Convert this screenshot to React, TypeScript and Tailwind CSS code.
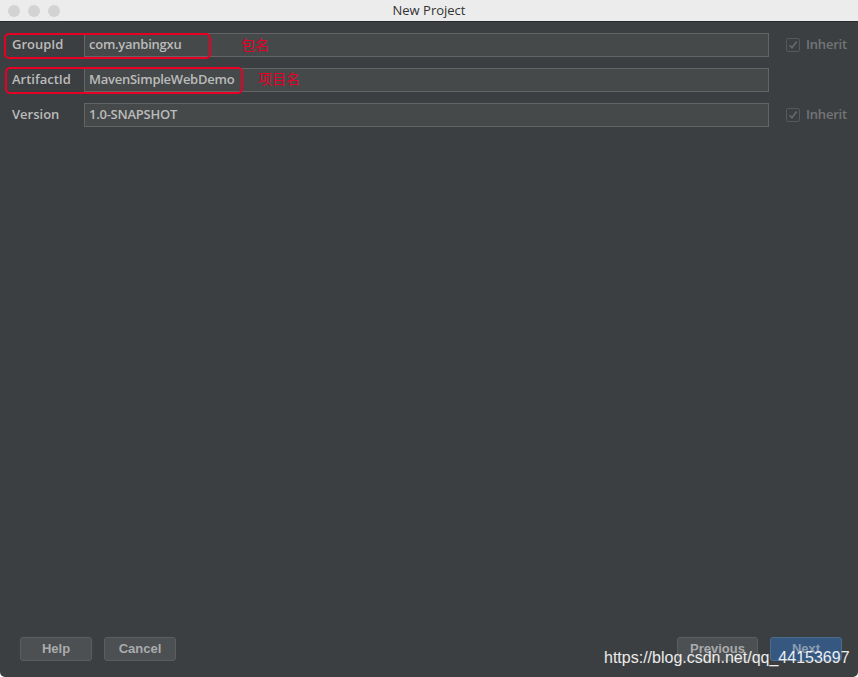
import React from 'react'

const ui = { fontFamily: '"Open Sans", "DejaVu Sans", sans-serif' }
const btn = { fontFamily: '"Liberation Sans", Arial, sans-serif' }
const cjk = { fontFamily: '"Noto Sans CJK SC", sans-serif' }

function Inherit() {
    return (
        <div className="flex items-center gap-[6px] pl-[17px]">
            <div className="w-[14px] h-[14px] rounded-[2px] border border-[#56585a] flex items-center justify-center">
                <svg width="10" height="10" viewBox="0 0 10 10">
                    <path d="M1.5 5.2 L4 7.8 L8.6 1.6" fill="none" stroke="#67696b" strokeWidth="1.6" />
                </svg>
            </div>
            <span className="text-[13px] font-semibold text-[#737577] tracking-[-0.2px]" style={ui}>
                Inherit
            </span>
        </div>
    )
}

function Row({ label, value, inherit }: { label: string; value: string; inherit?: boolean }) {
    return (
        <div className="flex items-center h-[24px]">
            <div className="w-[84px] pl-[12px] text-[13px] font-semibold text-[#bbbbbb]" style={ui}>
                {label}
            </div>
            <div className="w-[685px] h-[24px] bg-[#45494a] border border-[#646464] flex items-center pl-[4px] text-[13px] font-semibold text-[#bbbbbb] tracking-[-0.25px]" style={ui}>
                {value}
            </div>
            {inherit && <Inherit />}
        </div>
    )
}

function Button({ label, w, primary }: { label: string; w: string; primary?: boolean }) {
    return (
        <div
            className={`${w} h-[24px] rounded-[3px] border flex items-center justify-center text-[13px] font-bold ${
                primary
                    ? 'bg-[#365880] border-[#4a6d8f] text-[#8c9cb0]'
                    : 'bg-[#4c5052] border-[#5b5e60] text-[#a9abad]'
            }`}
            style={btn}>
            {label}
        </div>
    )
}

export default function App() {
    return (
        <div className="w-[858px] h-[677px] bg-white">
            <div className="relative w-full h-full flex flex-col bg-[#3c3f41] rounded-b-[5px] overflow-hidden">
                <div className="h-[22px] bg-[#ececec] border-b border-[#2b2b2b] flex items-center relative">
                    <div className="flex gap-[8px] pl-[8px]">
                        <div className="w-[12px] h-[12px] rounded-full bg-[#d3d3d3]" />
                        <div className="w-[12px] h-[12px] rounded-full bg-[#d3d3d3]" />
                        <div className="w-[12px] h-[12px] rounded-full bg-[#d3d3d3]" />
                    </div>
                    <div className="absolute inset-0 flex items-center justify-center text-[13px] text-[#333333]" style={ui}>
                        New Project
                    </div>
                </div>

                <div className="flex flex-col gap-[11px] pt-[11px]">
                    <Row label="GroupId" value="com.yanbingxu" inherit />
                    <Row label="ArtifactId" value="MavenSimpleWebDemo" />
                    <Row label="Version" value="1.0-SNAPSHOT" inherit />
                </div>

                <div className="flex-1" />

                <div className="flex items-center justify-between pl-[20px] pr-[16px] pb-[16px]">
                    <div className="flex gap-[12px]">
                        <Button label="Help" w="w-[72px]" />
                        <Button label="Cancel" w="w-[72px]" />
                    </div>
                    <div className="flex gap-[12px]">
                        <Button label="Previous" w="w-[81px]" />
                        <Button label="Next" w="w-[72px]" primary />
                    </div>
                </div>

                {/* annotations */}
                <div className="absolute left-[4px] top-[33px] w-[207px] h-[26px] border-[2px] border-[#e60026] rounded-[5px]" />
                <div className="absolute left-[5px] top-[67px] w-[238px] h-[27px] border-[2px] border-[#e60026] rounded-[5px]" />
                <div className="absolute left-[241px] top-[34px] text-[14px] text-[#e60026]" style={cjk}>
                    包名
                </div>
                <div className="absolute left-[258px] top-[68px] text-[14px] text-[#e60026]" style={cjk}>
                    项目名
                </div>
                <div
                    className="absolute left-[604px] top-[646px] text-[16px] text-white/90"
                    style={btn}>
                    https://blog.csdn.net/qq_44153697
                </div>
            </div>
        </div>
    )
}
